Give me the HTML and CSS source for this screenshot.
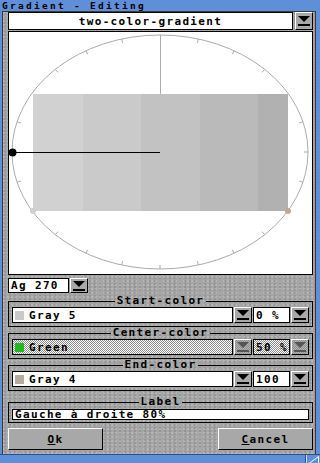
FILE: index.html
```html
<!DOCTYPE html>
<html>
<head>
<meta charset="utf-8">
<title>Gradient - Editing</title>
<link rel="stylesheet" href="styles.css">
</head>
<body>
<div class="window">
  <div class="titlebar"><span class="title">Gradient - Editing</span></div>
  <div class="frame">
    <div class="content">
      <div class="row combo">
        <div class="field grow center">two-color-gradient</div>
        <div class="popbtn"></div>
      </div>
      <div class="canvas">
        <svg class="plot" viewBox="9 32 303 242" width="303" height="242">
          <g stroke="#ababab" fill="none" stroke-width="1">
            <ellipse cx="160" cy="152" rx="148" ry="117"/>
            <line x1="160.5" y1="35" x2="160.5" y2="94"/>
            <line x1="308" y1="152" x2="304" y2="152"/>
            <line x1="303" y1="121.7" x2="299.2" y2="123"/>
            <line x1="264.6" y1="69.3" x2="262.1" y2="72.4"/>
            <line x1="234" y1="50.7" x2="232.3" y2="54.3"/>
            <line x1="198.3" y1="39" x2="197.5" y2="42.9"/>
            <line x1="121.7" y1="39" x2="122.5" y2="42.9"/>
            <line x1="86" y1="50.7" x2="87.7" y2="54.3"/>
            <line x1="55.4" y1="69.3" x2="57.9" y2="72.4"/>
            <line x1="17" y1="121.7" x2="20.8" y2="123"/>
            <line x1="17" y1="182.3" x2="20.8" y2="181"/>
            <line x1="55.4" y1="234.7" x2="57.9" y2="231.6"/>
            <line x1="86" y1="253.3" x2="87.7" y2="249.7"/>
            <line x1="121.7" y1="265" x2="122.5" y2="261.1"/>
            <line x1="160" y1="269" x2="160" y2="265"/>
            <line x1="198.3" y1="265" x2="197.5" y2="261.1"/>
            <line x1="234" y1="253.3" x2="232.3" y2="249.7"/>
            <line x1="264.6" y1="234.7" x2="262.1" y2="231.6"/>
            <line x1="303" y1="182.3" x2="299.2" y2="181"/>
          </g>
          <g shape-rendering="crispEdges">
            <rect x="33" y="94" width="50" height="117" fill="#d1d1d1"/>
            <rect x="83" y="94" width="58" height="117" fill="#cacaca"/>
            <rect x="141" y="94" width="59" height="117" fill="#c2c2c2"/>
            <rect x="200" y="94" width="58" height="117" fill="#bababa"/>
            <rect x="258" y="94" width="30" height="117" fill="#b1b1b1"/>
            <line x1="12" y1="152.5" x2="160" y2="152.5" stroke="#000"/>
          </g>
          <circle cx="12.5" cy="152.5" r="4" fill="#000"/>
          <circle cx="33" cy="211" r="3" fill="#cfcfcf"/>
          <circle cx="288" cy="211" r="3" fill="#bca898"/>
        </svg>
      </div>
      <div class="row ag">
        <div class="field agfield">Ag 270</div>
        <div class="popbtn"></div>
      </div>
      <fieldset class="group">
        <legend>Start-color</legend>
        <div class="row colorrow">
          <div class="field grow"><span class="swatch gray5"></span>Gray 5</div>
          <div class="popbtn"></div>
          <div class="field pct">0 %</div>
          <div class="popbtn"></div>
        </div>
      </fieldset>
      <fieldset class="group disabled">
        <legend>Center-color</legend>
        <div class="row colorrow">
          <div class="field grow"><span class="swatch green"></span>Green</div>
          <div class="popbtn"></div>
          <div class="field pct">50 %</div>
          <div class="popbtn"></div>
        </div>
      </fieldset>
      <fieldset class="group">
        <legend>End-color</legend>
        <div class="row colorrow">
          <div class="field grow"><span class="swatch gray4"></span>Gray 4</div>
          <div class="popbtn"></div>
          <div class="field pct">100</div>
          <div class="popbtn"></div>
        </div>
      </fieldset>
      <fieldset class="group labelgroup">
        <legend>Label</legend>
        <div class="field labelfield">Gauche à droite 80%</div>
      </fieldset>
      <div class="buttons">
        <button class="btn"><u>O</u>k</button>
        <button class="btn"><u>C</u>ancel</button>
      </div>
    </div>
  </div>
  <div class="statusbar">
    <svg class="sizer" viewBox="0 0 15 9" width="15" height="9">
      <line x1="0.5" y1="0" x2="0.5" y2="9" stroke="#2a4f8f"/>
      <line x1="1.5" y1="0" x2="1.5" y2="9" stroke="#cfe0ff"/>
      <polyline points="4,8.5 13.5,8.5 13.5,1.5 4,8.5" fill="none" stroke="#fff"/>
    </svg>
  </div>
</div>
</body>
</html>
```
FILE: styles.css
```css
* { box-sizing: border-box; margin: 0; padding: 0; }
html, body { width: 320px; height: 463px; overflow: hidden; background: #a8a8a8; }
body {
  font-family: "DejaVu Sans Mono", "Liberation Mono", monospace;
  font-weight: bold;
  font-size: 11px;
  letter-spacing: 1.35px;
  color: #000;
}
.window { width: 320px; height: 463px; display: flex; flex-direction: column; }
.titlebar {
  height: 11px;
  flex: none;
  background: #5f8fd8;
  padding-left: 2px;
  display: flex;
  align-items: flex-start;
}
.title {
  font-size: 9.5px;
  letter-spacing: 2.28px;
  line-height: 11px;
  white-space: nowrap;
}
.frame {
  flex: 1;
  display: flex;
  border-left: 2px solid #5f8fd8;
  border-right: 4px solid #5f8fd8;
  min-height: 0;
}
.content {
  flex: 1;
  display: flex;
  flex-direction: column;
  border-top: 1px solid #3a3a3a;
  border-left: 1px solid #3a3a3a;
  border-right: 1px solid #3a3a3a;
  padding: 0 2px 0 5px;
  background-color: #a5a5a5;
  background-image:
    radial-gradient(circle at 1px 1px, rgba(255,255,255,.18) 1px, transparent 1.5px),
    radial-gradient(circle at 2px 2px, rgba(0,0,0,.10) 1px, transparent 1.5px);
  background-size: 4px 4px, 5px 3px;
}
.row { display: flex; gap: 1px; }
.combo { height: 18px; gap: 2px; flex: none; }
.field {
  background: #fff;
  border: 1px solid #000;
  display: flex;
  align-items: center;
  padding-left: 2px;
  white-space: nowrap;
  overflow: hidden;
}
.grow { flex: 1; min-width: 0; }
.center { justify-content: center; padding-left: 0; }
.popbtn {
  width: 18px;
  flex: none;
  display: flex;
  flex-direction: column;
  align-items: center;
  justify-content: center;
  gap: 2px;
  background: #a8a8a8;
  border: 1px solid;
  border-color: #fff #000 #000 #fff;
}
.popbtn::before {
  content: "";
  border-left: 6px solid transparent;
  border-right: 6px solid transparent;
  border-top: 6px solid #000;
}
.popbtn::after { content: ""; width: 12px; height: 2px; background: #000; }
.canvas {
  margin-top: 1px;
  height: 244px;
  flex: none;
  border: 1px solid #000;
  background: #fff;
}
.plot { display: block; }
.ag { margin-top: 3px; height: 15px; flex: none; }
.agfield { width: 61px; }
.group {
  border: 1px solid #000;
  padding: 1px 3px 3px 3px;
  margin-top: 3px;
  flex: none;
}
.group + .group { margin-top: 1px; }
.group legend {
  margin: 0 auto;
  padding: 0 2px;
  height: 10px;
  line-height: 10px;
}
.colorrow { height: 16px; }
.pct { width: 37px; flex: none; }
.swatch { width: 9px; height: 9px; margin-right: 5px; flex: none; }
.gray5 { background: #c9c9c9; }
.gray4 { background: #b7aa9e; }
.green { background: #22b822; }
.disabled .field {
  background: repeating-conic-gradient(#8e8e8e 0 25%, #fff 0 50%) 0 0 / 2px 2px;
}
.disabled .popbtn {
  background: repeating-conic-gradient(#8e8e8e 0 25%, #b4b4b4 0 50%) 0 0 / 2px 2px;
}
.disabled .popbtn::before { border-top-color: #555; }
.disabled .popbtn::after { background: #555; }
.group.labelgroup { margin-top: 6px; padding-bottom: 2px; padding-top: 2px; }
.labelfield { height: 11px; }
.buttons { display: flex; justify-content: space-between; margin-top: 5px; flex: none; }
.btn {
  width: 95px;
  height: 22px;
  font: inherit;
  letter-spacing: inherit;
  color: #000;
  background: #a8a8a8;
  border: 1px solid;
  border-color: #fff #000 #000 #fff;
}
.statusbar {
  height: 9px;
  flex: none;
  background: #5f8fd8;
  display: flex;
  justify-content: flex-end;
  border-top: 1px solid #2a4f8f;
}
.sizer { display: block; }
```
